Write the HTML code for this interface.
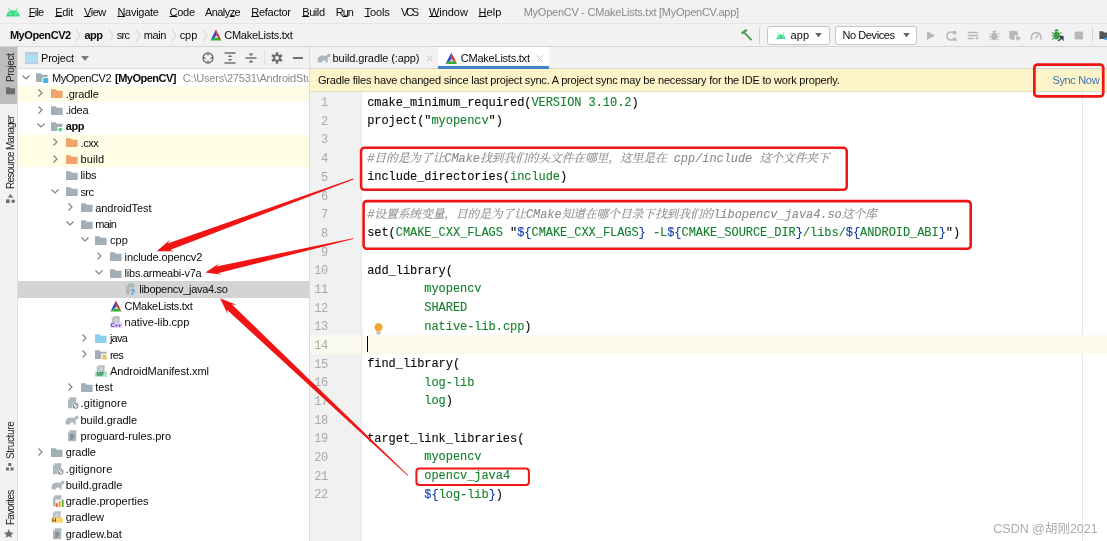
<!DOCTYPE html>
<html lang="en"><head><meta charset="utf-8"><title>MyOpenCV - CMakeLists.txt [MyOpenCV.app]</title>
<style>
html,body{margin:0;padding:0;}
body{width:1107px;height:541px;overflow:hidden;position:relative;background:#fff;will-change:transform;font-family:"Liberation Sans", "Noto Sans CJK SC", sans-serif;font-size:11px;color:#0a0a0a;}
.abs{position:absolute;}
.t{position:absolute;white-space:pre;line-height:16px;height:16px;}
.b{font-weight:bold;}
.g{color:#8a8a8a;}
.code{position:absolute;left:367.2px;white-space:pre;font-family:"Liberation Mono", "Noto Serif CJK SC", monospace;font-size:12px;letter-spacing:-0.06px;line-height:18px;height:18px;color:#0a0a0a;-webkit-text-stroke:0.12px currentColor;}
.ln{position:absolute;left:308px;width:20px;letter-spacing:-0.3px;text-align:right;font-family:"Liberation Mono", "Noto Serif CJK SC", monospace;font-size:12px;line-height:18px;height:18px;color:#a9a9a9;}
.s{color:#17802f;}
.v{color:#0f3bb0;}
.c{color:#8c8c8c;font-style:italic;}
.c i{font-size:11.72px;font-style:italic;}
.u{text-decoration:underline;text-underline-offset:0.3px;text-decoration-thickness:1px;}
svg{position:absolute;overflow:visible;}
.vt{position:absolute;white-space:pre;transform:rotate(-90deg);transform-origin:0 0;font-size:10px;line-height:14px;height:14px;color:#222;}

</style></head><body>
<div class="abs" style="left:0px;top:0px;width:1107px;height:69px;background:#f2f2f2;"></div>
<div class="abs" style="left:0px;top:23px;width:1107px;height:1px;background:#e6e6e6;"></div>
<div class="abs" style="left:0px;top:46px;width:1107px;height:1px;background:#d4d4d4;"></div>
<div class="abs" style="left:0px;top:47px;width:17px;height:494px;background:#f2f2f2;"></div>
<div class="abs" style="left:0px;top:47px;width:17px;height:57px;background:#bdbdbd;"></div>
<div class="abs" style="left:17px;top:47px;width:1px;height:494px;background:#dedede;"></div>
<div class="abs" style="left:18px;top:68px;width:291px;height:1px;background:#dedede;"></div>
<div class="abs" style="left:310px;top:68px;width:797px;height:1px;background:#d4d4d4;"></div>
<div class="abs" style="left:309px;top:47px;width:1px;height:494px;background:#dcdcdc;"></div>
<svg style="left:6px;top:7.6px" width="14" height="8.6" viewBox="0 0 14 8.6"><path d="M0.3 8.6 A6.7 6.4 0 0 1 13.7 8.6 Z" fill="#3ddc84"/><path d="M2.6 0.4 L4.2 3 M11.4 0.4 L9.8 3" stroke="#3ddc84" stroke-width="1" fill="none"/><circle cx="4.2" cy="5.8" r="0.75" fill="#f2f2f2"/><circle cx="9.8" cy="5.8" r="0.75" fill="#f2f2f2"/></svg>
<div class="t m" style="left:28.7px;top:4px;letter-spacing:-0.74px;"><span class="u">F</span>ile</div>
<div class="t m" style="left:55.2px;top:4px;letter-spacing:-0.29px;"><span class="u">E</span>dit</div>
<div class="t m" style="left:84px;top:4px;letter-spacing:-0.48px;"><span class="u">V</span>iew</div>
<div class="t m" style="left:117.4px;top:4px;letter-spacing:-0.26px;"><span class="u">N</span>avigate</div>
<div class="t m" style="left:169.6px;top:4px;letter-spacing:-0.30px;"><span class="u">C</span>ode</div>
<div class="t m" style="left:205px;top:4px;letter-spacing:-0.57px;">Analy<span class="u">z</span>e</div>
<div class="t m" style="left:251.3px;top:4px;letter-spacing:-0.27px;"><span class="u">R</span>efactor</div>
<div class="t m" style="left:302.2px;top:4px;letter-spacing:-0.41px;"><span class="u">B</span>uild</div>
<div class="t m" style="left:335.8px;top:4px;letter-spacing:-1.04px;">R<span class="u">u</span>n</div>
<div class="t m" style="left:364.5px;top:4px;letter-spacing:-0.09px;"><span class="u">T</span>ools</div>
<div class="t m" style="left:400.9px;top:4px;letter-spacing:-2.26px;">VCS</div>
<div class="t m" style="left:429px;top:4px;letter-spacing:-0.06px;"><span class="u">W</span>indow</div>
<div class="t m" style="left:478.6px;top:4px;letter-spacing:0.06px;"><span class="u">H</span>elp</div>
<div class="t g ttl" style="left:523.7px;top:4px;letter-spacing:-0.25px;">MyOpenCV - CMakeLists.txt [MyOpenCV.app]</div>
<div class="t b" style="left:9.9px;top:27px;letter-spacing:-0.44px;">MyOpenCV2</div>
<div class="t b" style="left:84.5px;top:27px;letter-spacing:-0.58px;">app</div>
<div class="t " style="left:116.7px;top:27px;letter-spacing:-0.73px;">src</div>
<div class="t " style="left:143.7px;top:27px;letter-spacing:-0.41px;">main</div>
<div class="t " style="left:179.7px;top:27px;letter-spacing:-0.07px;">cpp</div>
<div class="t " style="left:224.3px;top:27px;letter-spacing:-0.28px;">CMakeLists.txt</div>
<svg style="left:75px;top:28.5px" width="6" height="13" viewBox="0 0 6 13"><path d="M1 0.5 L5 6.5 L1 12.5" fill="none" stroke="#cfcfcf" stroke-width="1"/></svg>
<svg style="left:107.5px;top:28.5px" width="6" height="13" viewBox="0 0 6 13"><path d="M1 0.5 L5 6.5 L1 12.5" fill="none" stroke="#cfcfcf" stroke-width="1"/></svg>
<svg style="left:134.5px;top:28.5px" width="6" height="13" viewBox="0 0 6 13"><path d="M1 0.5 L5 6.5 L1 12.5" fill="none" stroke="#cfcfcf" stroke-width="1"/></svg>
<svg style="left:170.5px;top:28.5px" width="6" height="13" viewBox="0 0 6 13"><path d="M1 0.5 L5 6.5 L1 12.5" fill="none" stroke="#cfcfcf" stroke-width="1"/></svg>
<svg style="left:202px;top:28.5px" width="6" height="13" viewBox="0 0 6 13"><path d="M1 0.5 L5 6.5 L1 12.5" fill="none" stroke="#cfcfcf" stroke-width="1"/></svg>
<svg style="left:209.5px;top:29px" width="12" height="12" viewBox="0 0 12 12"><path d="M6 0.5 L6.6 7 L0.5 11.5 Z" fill="#2a4bd0"/><path d="M6 0.5 L11.5 11.5 L6.6 7 Z" fill="#e02020"/><path d="M0.5 11.5 L6.6 7 L11.5 11.5 Z" fill="#2fb02f"/><path d="M6.3 6.2 L4.6 9 L8.4 9 Z" fill="#d8d8d8"/></svg>
<svg style="left:739px;top:28px" width="15" height="14" viewBox="0 0 15 14"><path d="M2 4.5 L6.5 1.2 L9 2.2 L6.3 4.2 L13.3 11.5 L11.8 12.8 L4.8 5.5 L3.4 6.4 Z" fill="#4f9b4f"/></svg>
<div class="abs" style="left:759px;top:27px;width:1px;height:17px;background:#d0d0d0;"></div>
<div class="abs" style="left:767px;top:26px;width:61px;height:17px;background:#fff;border:1px solid #c6c6c6;border-radius:3px;"></div>
<svg style="left:776px;top:31.5px" width="10" height="7.5" viewBox="0 0 16 12"><path d="M1 11 A7 7 0 0 1 15 11 Z" fill="#3ddc84"/><path d="M3.2 1 L5 4 M12.8 1 L11 4" stroke="#3ddc84" stroke-width="1.4" fill="none"/><circle cx="5" cy="8" r="1" fill="#fff"/><circle cx="11" cy="8" r="1" fill="#fff"/></svg>
<div class="t " style="left:790.5px;top:27px;letter-spacing:0.07px;">app</div>
<svg style="left:815px;top:33px" width="7" height="4.2" viewBox="0 0 8 5"><path d="M0 0 L8 0 L4 5 Z" fill="#626262"/></svg>
<div class="abs" style="left:835px;top:26px;width:80px;height:17px;background:#fff;border:1px solid #c6c6c6;border-radius:3px;"></div>
<div class="t " style="left:842.4px;top:27px;letter-spacing:-0.40px;">No Devices</div>
<svg style="left:903px;top:33px" width="7" height="4.2" viewBox="0 0 8 5"><path d="M0 0 L8 0 L4 5 Z" fill="#626262"/></svg>
<svg style="left:0;top:0" width="1107" height="48" viewBox="0 0 1107 48"><path d="M927 31.2 L935 35.5 L927 39.8 Z" fill="#b7b7b7"/><path d="M954.3 34 A4 4 0 1 0 954.6 37.6" fill="none" stroke="#b7b7b7" stroke-width="1.5"/><path d="M952 31 L956.2 31 L956.2 35.2 Z" fill="#b7b7b7"/><path d="M952.6 40.8 L954.9 36.8 L957.2 40.8 Z" fill="#b7b7b7"/><path d="M967.8 32.6 H978 M967.8 35.6 H978 M967.8 38.6 H974" stroke="#b7b7b7" stroke-width="1.5"/><path d="M975.5 38.2 H978.5 M977 36.8 V39.8" stroke="#b7b7b7" stroke-width="1"/><ellipse cx="994.3" cy="36.4" rx="2.9" ry="3.7" fill="#b7b7b7"/><path d="M992.3 32.4 A2 2 0 0 1 996.3 32.4 Z" fill="#b7b7b7"/><path d="M989.3 33.4 L991.8 34.8 M999.3 33.4 L996.8 34.8 M989 36.6 H991.5 M999.6 36.6 H997 M989.5 40 L991.8 38.4 M999.1 40 L996.8 38.4" stroke="#b7b7b7" stroke-width="1"/><path d="M1009.3 31 H1015.5 A2.5 2.5 0 0 1 1018 33.5 V35 H1014.8 V39.8 H1012 A2.7 2.7 0 0 1 1009.3 37.1 Z" fill="#b7b7b7"/><path d="M1016.2 35.6 L1021.4 38.2 L1016.2 40.8 Z" fill="#b7b7b7"/><path d="M1031.8 39.6 A4.9 4.9 0 1 1 1040.6 39.6" fill="none" stroke="#b7b7b7" stroke-width="1.7"/><path d="M1035.4 38.6 L1038.4 34.6" stroke="#b7b7b7" stroke-width="1.5"/><ellipse cx="1056.6" cy="35.6" rx="3" ry="3.9" fill="#3e9a45"/><path d="M1054.5 31.4 A2.1 2.1 0 0 1 1058.7 31.4 Z" fill="#3e9a45"/><path d="M1051.8 32.4 L1054 33.8 M1061.4 32.4 L1059.2 33.8 M1051.5 35.8 H1054 M1061.7 35.8 H1059.3 M1052 39.4 L1054.2 37.8" stroke="#3e9a45" stroke-width="1.1"/><path d="M1058.4 36 H1063.6 V41.2 Z" fill="#3d4b54"/><path d="M1058.3 41 L1062 37.4" stroke="#3d4b54" stroke-width="1.5"/><rect x="1074.6" y="31.6" width="8.4" height="7.8" fill="#b7b7b7"/><rect x="1092" y="28" width="1" height="14.5" fill="#d2d2d2"/><path d="M1099.4 31.3 H1103 L1104 32.6 H1107 V39 H1099.4 Z" fill="#55595c"/><rect x="1104.5" y="37.5" width="2.5" height="2.5" fill="#4a9fe0"/></svg>
<div class="vt" style="left:3.5px;top:81.7px;letter-spacing:-0.37px;">Project</div>
<svg style="left:5.7px;top:87px" width="9" height="7.5" viewBox="0 0 10 8"><path d="M0 0 H4 L5 1.3 H10 V8 H0 Z" fill="#6e6e6e"/></svg>
<div class="vt" style="left:3.5px;top:188.7px;letter-spacing:-0.74px;">Resource Manager</div>
<svg style="left:5.5px;top:193.5px" width="9" height="9" viewBox="0 0 10 10"><path d="M5 0 L8 4 H2 Z" fill="#6e6e6e"/><rect x="0" y="6" width="4" height="4" fill="#6e6e6e"/><circle cx="8" cy="8" r="2" fill="#6e6e6e"/></svg>
<div class="vt" style="left:3.5px;top:458.7px;letter-spacing:-0.35px;">Structure</div>
<svg style="left:5.7px;top:463px" width="7.5" height="7.5" viewBox="0 0 10 10"><rect x="3" y="0" width="4" height="4" fill="#6e6e6e"/><rect x="0" y="6" width="4" height="4" fill="#6e6e6e"/><rect x="6" y="6" width="4" height="4" fill="#6e6e6e"/></svg>
<div class="vt" style="left:3.5px;top:525.2px;letter-spacing:-0.74px;">Favorites</div>
<svg style="left:4px;top:529px" width="9.5" height="9" viewBox="0 0 11 10"><path d="M5.5 0 L7.2 3.6 L11 4 L8.2 6.6 L9 10 L5.5 8.2 L2 10 L2.8 6.6 L0 4 L3.8 3.6 Z" fill="#6e6e6e"/></svg>
<svg style="left:25px;top:52px" width="13" height="12" viewBox="0 0 13 12"><rect x="0.5" y="0.5" width="12" height="11" fill="#aee0f5" stroke="#c3c9cc"/><rect x="0.5" y="0.5" width="12" height="2.5" fill="#c3c9cc"/></svg>
<div class="t " style="left:41px;top:50px;letter-spacing:-0.21px;">Project</div>
<svg style="left:81px;top:56px" width="8" height="5" viewBox="0 0 8 5"><path d="M0 0 L8 0 L4 5 Z" fill="#7a7a7a"/></svg>
<svg style="left:202px;top:52px" width="12" height="12" viewBox="0 0 12 12"><circle cx="6" cy="6" r="5" fill="none" stroke="#6e6e6e" stroke-width="1.4"/><path d="M6 1 V3.8 M6 8.2 V11 M1 6 H3.8 M8.2 6 H11" stroke="#6e6e6e" stroke-width="1.3"/></svg>
<svg style="left:224px;top:52px" width="12" height="12" viewBox="0 0 12 12"><path d="M0.5 1 H11.5 M0.5 11 H11.5" stroke="#6e6e6e" stroke-width="1.5"/><path d="M6 2.8 L8.2 5 H3.8 Z M6 9.2 L8.2 7 H3.8 Z" fill="#6e6e6e"/></svg>
<svg style="left:245px;top:52px" width="12" height="12" viewBox="0 0 12 12"><path d="M0.5 6 H11.5" stroke="#6e6e6e" stroke-width="1.5"/><path d="M6 4.2 L8.4 1.6 H3.6 Z M6 7.8 L8.4 10.4 H3.6 Z" fill="#6e6e6e"/></svg>
<div class="abs" style="left:264px;top:51px;width:1px;height:14px;background:#e0e0e0;"></div>
<svg style="left:271px;top:52px" width="12" height="12" viewBox="-6 -6 12 12"><g fill="#6e6e6e"><circle r="3.8"/><rect x="-1.2" y="-5.8" width="2.4" height="3" transform="rotate(0)"/><rect x="-1.2" y="-5.8" width="2.4" height="3" transform="rotate(60)"/><rect x="-1.2" y="-5.8" width="2.4" height="3" transform="rotate(120)"/><rect x="-1.2" y="-5.8" width="2.4" height="3" transform="rotate(180)"/><rect x="-1.2" y="-5.8" width="2.4" height="3" transform="rotate(240)"/><rect x="-1.2" y="-5.8" width="2.4" height="3" transform="rotate(300)"/></g><circle r="1.9" fill="#f2f2f2"/></svg>
<div class="abs" style="left:293.3px;top:57.3px;width:10.2px;height:1.6px;background:#6e6e6e;"></div>
<div class="abs" style="left:18px;top:85.7px;width:291px;height:16.5px;background:#fefde6;"></div>
<div class="abs" style="left:18px;top:134.6px;width:291px;height:16.5px;background:#fefde6;"></div>
<div class="abs" style="left:18px;top:150.8px;width:291px;height:16.5px;background:#fefde6;"></div>
<div class="abs" style="left:18px;top:281.2px;width:291px;height:16.5px;background:#d4d4d4;"></div>
<svg style="left:22px;top:74.5px" width="8" height="5" viewBox="0 0 8 5"><path d="M0.5 0.5 L4 4 L7.5 0.5" fill="none" stroke="#7d7d7d" stroke-width="1.1"/></svg>
<svg style="left:36.4px;top:72.0px" width="12" height="11" viewBox="0 0 12 11"><path d="M0 1.2 H4.6 L5.9 2.7 H11.6 V10 H0 Z" fill="#a3afb7"/><rect x="6.3" y="5.2" width="6" height="6" fill="#fff"/><rect x="7.2" y="6" width="5" height="5" fill="#40b6e0"/></svg>
<div class="t " style="left:51.9px;top:69.5px;letter-spacing:-0.42px;">MyOpenCV2</div>
<div class="t b" style="left:115px;top:69.5px;letter-spacing:-0.50px;">[MyOpenCV]</div>
<div class="t g" style="left:182.8px;top:69.5px;letter-spacing:-0.20px;width:126.2px;overflow:hidden;letter-spacing:-0.19px;">C:\Users\27531\AndroidStudioProjects\MyOpenCV2</div>
<svg style="left:38.0px;top:89.3px" width="5" height="8" viewBox="0 0 5 8"><path d="M0.5 0.5 L4 4 L0.5 7.5" fill="none" stroke="#7d7d7d" stroke-width="1.1"/></svg>
<svg style="left:51px;top:88.3px" width="12" height="11" viewBox="0 0 12 11"><path d="M0 1.2 H4.6 L5.9 2.7 H11.6 V10 H0 Z" fill="#f2a36b"/></svg>
<div class="t " style="left:65.7px;top:85.8px;letter-spacing:-0.09px;">.gradle</div>
<svg style="left:38.0px;top:105.6px" width="5" height="8" viewBox="0 0 5 8"><path d="M0.5 0.5 L4 4 L0.5 7.5" fill="none" stroke="#7d7d7d" stroke-width="1.1"/></svg>
<svg style="left:51px;top:104.6px" width="12" height="11" viewBox="0 0 12 11"><path d="M0 1.2 H4.6 L5.9 2.7 H11.6 V10 H0 Z" fill="#a3afb7"/></svg>
<div class="t " style="left:65.7px;top:102.1px;letter-spacing:-0.26px;">.idea</div>
<svg style="left:36.5px;top:123.4px" width="8" height="5" viewBox="0 0 8 5"><path d="M0.5 0.5 L4 4 L7.5 0.5" fill="none" stroke="#7d7d7d" stroke-width="1.1"/></svg>
<svg style="left:51px;top:120.9px" width="12" height="11" viewBox="0 0 12 11"><path d="M0 1.2 H4.6 L5.9 2.7 H11.6 V10 H0 Z" fill="#a3afb7"/><rect x="6.5" y="6" width="5.5" height="5" fill="#fff"/><circle cx="9.3" cy="8.6" r="1.9" fill="#3ddc84"/></svg>
<div class="t b" style="left:65.7px;top:118.4px;letter-spacing:-0.43px;">app</div>
<svg style="left:52.8px;top:138.2px" width="5" height="8" viewBox="0 0 5 8"><path d="M0.5 0.5 L4 4 L0.5 7.5" fill="none" stroke="#7d7d7d" stroke-width="1.1"/></svg>
<svg style="left:65.8px;top:137.2px" width="12" height="11" viewBox="0 0 12 11"><path d="M0 1.2 H4.6 L5.9 2.7 H11.6 V10 H0 Z" fill="#f2a36b"/></svg>
<div class="t " style="left:80.5px;top:134.7px;letter-spacing:-0.42px;">.cxx</div>
<svg style="left:52.8px;top:154.5px" width="5" height="8" viewBox="0 0 5 8"><path d="M0.5 0.5 L4 4 L0.5 7.5" fill="none" stroke="#7d7d7d" stroke-width="1.1"/></svg>
<svg style="left:65.8px;top:153.5px" width="12" height="11" viewBox="0 0 12 11"><path d="M0 1.2 H4.6 L5.9 2.7 H11.6 V10 H0 Z" fill="#f2a36b"/></svg>
<div class="t " style="left:80.5px;top:151.0px;letter-spacing:0.12px;">build</div>
<svg style="left:65.8px;top:169.8px" width="12" height="11" viewBox="0 0 12 11"><path d="M0 1.2 H4.6 L5.9 2.7 H11.6 V10 H0 Z" fill="#a3afb7"/></svg>
<div class="t " style="left:80.5px;top:167.3px;letter-spacing:-0.13px;">libs</div>
<svg style="left:51.3px;top:188.6px" width="8" height="5" viewBox="0 0 8 5"><path d="M0.5 0.5 L4 4 L7.5 0.5" fill="none" stroke="#7d7d7d" stroke-width="1.1"/></svg>
<svg style="left:65.8px;top:186.1px" width="12" height="11" viewBox="0 0 12 11"><path d="M0 1.2 H4.6 L5.9 2.7 H11.6 V10 H0 Z" fill="#a3afb7"/></svg>
<div class="t " style="left:80.5px;top:183.6px;letter-spacing:-0.63px;">src</div>
<svg style="left:67.5px;top:203.4px" width="5" height="8" viewBox="0 0 5 8"><path d="M0.5 0.5 L4 4 L0.5 7.5" fill="none" stroke="#7d7d7d" stroke-width="1.1"/></svg>
<svg style="left:80.5px;top:202.4px" width="12" height="11" viewBox="0 0 12 11"><path d="M0 1.2 H4.6 L5.9 2.7 H11.6 V10 H0 Z" fill="#a3afb7"/></svg>
<div class="t " style="left:95.2px;top:199.9px;letter-spacing:-0.05px;">androidTest</div>
<svg style="left:66.0px;top:221.2px" width="8" height="5" viewBox="0 0 8 5"><path d="M0.5 0.5 L4 4 L7.5 0.5" fill="none" stroke="#7d7d7d" stroke-width="1.1"/></svg>
<svg style="left:80.5px;top:218.7px" width="12" height="11" viewBox="0 0 12 11"><path d="M0 1.2 H4.6 L5.9 2.7 H11.6 V10 H0 Z" fill="#a3afb7"/></svg>
<div class="t " style="left:95.2px;top:216.2px;letter-spacing:-0.68px;">main</div>
<svg style="left:80.7px;top:237.4px" width="8" height="5" viewBox="0 0 8 5"><path d="M0.5 0.5 L4 4 L7.5 0.5" fill="none" stroke="#7d7d7d" stroke-width="1.1"/></svg>
<svg style="left:95.2px;top:234.9px" width="12" height="11" viewBox="0 0 12 11"><path d="M0 1.2 H4.6 L5.9 2.7 H11.6 V10 H0 Z" fill="#a3afb7"/></svg>
<div class="t " style="left:109.9px;top:232.4px;letter-spacing:0.08px;">cpp</div>
<svg style="left:96.9px;top:252.2px" width="5" height="8" viewBox="0 0 5 8"><path d="M0.5 0.5 L4 4 L0.5 7.5" fill="none" stroke="#7d7d7d" stroke-width="1.1"/></svg>
<svg style="left:109.9px;top:251.2px" width="12" height="11" viewBox="0 0 12 11"><path d="M0 1.2 H4.6 L5.9 2.7 H11.6 V10 H0 Z" fill="#a3afb7"/></svg>
<div class="t " style="left:124.60000000000001px;top:248.7px;letter-spacing:-0.13px;">include.opencv2</div>
<svg style="left:95.4px;top:270.0px" width="8" height="5" viewBox="0 0 8 5"><path d="M0.5 0.5 L4 4 L7.5 0.5" fill="none" stroke="#7d7d7d" stroke-width="1.1"/></svg>
<svg style="left:109.9px;top:267.5px" width="12" height="11" viewBox="0 0 12 11"><path d="M0 1.2 H4.6 L5.9 2.7 H11.6 V10 H0 Z" fill="#a3afb7"/></svg>
<div class="t " style="left:124.60000000000001px;top:265.0px;letter-spacing:-0.24px;">libs.armeabi-v7a</div>
<svg style="left:125.39999999999999px;top:283.3px" width="12.5" height="12" viewBox="0 0 12.5 12"><path d="M3 0.3 H9.3 V11.3 H1 V2.6 Z" fill="#aeb8bf"/><path d="M3 0.3 V2.6 H1 Z" fill="#d5dbdf"/><rect x="4.6" y="4.4" width="6.2" height="7.4" fill="#d5d5d5" opacity="0.85"/><text x="4.9" y="11.6" font-size="8.5" fill="#3a8fdd" font-family="Liberation Sans, sans-serif" font-weight="bold">?</text></svg>
<div class="t " style="left:139.29999999999998px;top:281.3px;letter-spacing:-0.29px;">libopencv_java4.so</div>
<svg style="left:109.9px;top:299.6px" width="12" height="12" viewBox="0 0 12 12"><path d="M6 0.5 L6.6 7 L0.5 11.5 Z" fill="#2a4bd0"/><path d="M6 0.5 L11.5 11.5 L6.6 7 Z" fill="#e02020"/><path d="M0.5 11.5 L6.6 7 L11.5 11.5 Z" fill="#2fb02f"/><path d="M6.3 6.2 L4.6 9 L8.4 9 Z" fill="#d8d8d8"/></svg>
<div class="t " style="left:124.60000000000001px;top:297.6px;letter-spacing:-0.30px;">CMakeLists.txt</div>
<svg style="left:109.60000000000001px;top:315.9px" width="12.5" height="12" viewBox="0 0 12.5 12"><path d="M3.6 0.2 H9.6 V7 H1.8 V2.2 Z" fill="#b3bcc3"/><path d="M3.6 0.2 V2.2 H1.8 Z" fill="#dfe3e6"/><path d="M4.5 3 H8 M3.5 4.8 H8" stroke="#e9ecee" stroke-width="0.8"/><rect x="0" y="6.4" width="12.2" height="5.4" fill="#ddcff8"/><text x="0.7" y="11" font-size="5.6" fill="#5b35b8" font-family="Liberation Sans, sans-serif" font-weight="bold">C++</text></svg>
<div class="t " style="left:124.60000000000001px;top:313.9px;letter-spacing:-0.01px;">native-lib.cpp</div>
<svg style="left:82.2px;top:333.7px" width="5" height="8" viewBox="0 0 5 8"><path d="M0.5 0.5 L4 4 L0.5 7.5" fill="none" stroke="#7d7d7d" stroke-width="1.1"/></svg>
<svg style="left:95.2px;top:332.7px" width="12" height="11" viewBox="0 0 12 11"><path d="M0 1.2 H4.6 L5.9 2.7 H11.6 V10 H0 Z" fill="#8fd0ef"/></svg>
<div class="t " style="left:109.9px;top:330.2px;letter-spacing:-0.76px;">java</div>
<svg style="left:82.2px;top:350.0px" width="5" height="8" viewBox="0 0 5 8"><path d="M0.5 0.5 L4 4 L0.5 7.5" fill="none" stroke="#7d7d7d" stroke-width="1.1"/></svg>
<svg style="left:95.2px;top:349.0px" width="12" height="11" viewBox="0 0 12 11"><path d="M0 1.2 H4.6 L5.9 2.7 H11.6 V10 H0 Z" fill="#a3afb7"/><rect x="6.2" y="4.6" width="6" height="6.6" fill="#fff"/><rect x="7" y="5.3" width="5" height="5.7" fill="#f6e6b8"/><path d="M7.8 6.8 H11.2 M7.8 8.2 H11.2 M7.8 9.6 H11.2" stroke="#dba53c" stroke-width="0.8"/></svg>
<div class="t " style="left:109.9px;top:346.5px;letter-spacing:-0.74px;">res</div>
<svg style="left:94.9px;top:364.8px" width="12.5" height="12" viewBox="0 0 12.5 12"><path d="M3.6 0.2 H9.6 V7 H1.8 V2.2 Z" fill="#b3bcc3"/><path d="M3.6 0.2 V2.2 H1.8 Z" fill="#dfe3e6"/><path d="M4.5 3 H8 M3.5 4.8 H8" stroke="#e9ecee" stroke-width="0.8"/><rect x="0" y="6.4" width="12" height="5.4" fill="#a9e5c0"/><text x="1.5" y="11" font-size="5.4" fill="#1f7d46" font-family="Liberation Sans, sans-serif" font-weight="bold">MF</text></svg>
<div class="t " style="left:109.9px;top:362.8px;letter-spacing:-0.03px;">AndroidManifest.xml</div>
<svg style="left:67.5px;top:382.6px" width="5" height="8" viewBox="0 0 5 8"><path d="M0.5 0.5 L4 4 L0.5 7.5" fill="none" stroke="#7d7d7d" stroke-width="1.1"/></svg>
<svg style="left:80.5px;top:381.6px" width="12" height="11" viewBox="0 0 12 11"><path d="M0 1.2 H4.6 L5.9 2.7 H11.6 V10 H0 Z" fill="#a3afb7"/></svg>
<div class="t " style="left:95.2px;top:379.1px;letter-spacing:-0.01px;">test</div>
<svg style="left:66.6px;top:397.3px" width="12.5" height="12" viewBox="0 0 12.5 12"><path d="M3 0.3 H9.3 V11.3 H1 V2.6 Z" fill="#aeb8bf"/><path d="M3 0.3 V2.6 H1 Z" fill="#d5dbdf"/><circle cx="8.6" cy="8.8" r="3.4" fill="#fff"/><circle cx="8.6" cy="8.8" r="2.5" fill="none" stroke="#5f6468" stroke-width="0.9"/><path d="M6.9 10.5 L10.3 7.1" stroke="#5f6468" stroke-width="0.9"/></svg>
<div class="t " style="left:80.5px;top:395.3px;letter-spacing:0.14px;">.gitignore</div>
<svg style="left:65.3px;top:414.6px" width="14" height="10" viewBox="0 0 14 10"><path d="M0.8 9.6 C0 5.6 1.8 2.6 5.2 2.6 C7.4 2.6 8.6 3.4 9.8 2.2 C10.9 1 12.2 0.3 13.1 1.2 C14 2.2 13.4 3.8 12.2 4.2 C11.4 4.5 11 4.1 10.7 4.8 L10.7 9.6 H8.7 V8 C7.6 7.4 6.3 7.4 5.2 8 V9.6 H3.2 V8.2 L2.7 9.6 Z" fill="#adb7be"/></svg>
<div class="t " style="left:80.5px;top:411.6px;letter-spacing:-0.02px;">build.gradle</div>
<svg style="left:66.6px;top:429.9px" width="12.5" height="12" viewBox="0 0 12.5 12"><path d="M3 0.3 H9.3 V11.3 H1 V2.6 Z" fill="#aeb8bf"/><path d="M3 0.3 V2.6 H1 Z" fill="#d5dbdf"/><path d="M3 5 H7.3 M3 7 H7.3 M3 9 H5.8" stroke="#606c75" stroke-width="1"/></svg>
<div class="t " style="left:80.5px;top:427.9px;letter-spacing:0.01px;">proguard-rules.pro</div>
<svg style="left:38.0px;top:447.7px" width="5" height="8" viewBox="0 0 5 8"><path d="M0.5 0.5 L4 4 L0.5 7.5" fill="none" stroke="#7d7d7d" stroke-width="1.1"/></svg>
<svg style="left:51px;top:446.7px" width="12" height="11" viewBox="0 0 12 11"><path d="M0 1.2 H4.6 L5.9 2.7 H11.6 V10 H0 Z" fill="#a3afb7"/></svg>
<div class="t " style="left:65.7px;top:444.2px;letter-spacing:-0.06px;">gradle</div>
<svg style="left:51.8px;top:462.5px" width="12.5" height="12" viewBox="0 0 12.5 12"><path d="M3 0.3 H9.3 V11.3 H1 V2.6 Z" fill="#aeb8bf"/><path d="M3 0.3 V2.6 H1 Z" fill="#d5dbdf"/><circle cx="8.6" cy="8.8" r="3.4" fill="#fff"/><circle cx="8.6" cy="8.8" r="2.5" fill="none" stroke="#5f6468" stroke-width="0.9"/><path d="M6.9 10.5 L10.3 7.1" stroke="#5f6468" stroke-width="0.9"/></svg>
<div class="t " style="left:65.7px;top:460.5px;letter-spacing:0.15px;">.gitignore</div>
<svg style="left:50.5px;top:479.8px" width="14" height="10" viewBox="0 0 14 10"><path d="M0.8 9.6 C0 5.6 1.8 2.6 5.2 2.6 C7.4 2.6 8.6 3.4 9.8 2.2 C10.9 1 12.2 0.3 13.1 1.2 C14 2.2 13.4 3.8 12.2 4.2 C11.4 4.5 11 4.1 10.7 4.8 L10.7 9.6 H8.7 V8 C7.6 7.4 6.3 7.4 5.2 8 V9.6 H3.2 V8.2 L2.7 9.6 Z" fill="#adb7be"/></svg>
<div class="t " style="left:65.7px;top:476.8px;letter-spacing:-0.02px;">build.gradle</div>
<svg style="left:51.8px;top:495.1px" width="12.5" height="12" viewBox="0 0 12.5 12"><path d="M3 0.3 H9.3 V11.3 H1 V2.6 Z" fill="#aeb8bf"/><path d="M3 0.3 V2.6 H1 Z" fill="#d5dbdf"/><rect x="3.4" y="4.5" width="8.6" height="7.5" fill="#fff" opacity="0.9"/><rect x="6.7" y="6.4" width="2" height="5.6" fill="#f0a030"/><rect x="9.7" y="4.6" width="2" height="7.4" fill="#62b543"/><rect x="3.7" y="8.2" width="2" height="3.8" fill="#f26522"/></svg>
<div class="t " style="left:65.7px;top:493.1px;letter-spacing:0.02px;">gradle.properties</div>
<svg style="left:50.7px;top:511.4px" width="12.5" height="12" viewBox="0 0 12.5 12"><path d="M3.6 0.2 H9.6 V7 H1.8 V2.2 Z" fill="#b3bcc3"/><path d="M3.6 0.2 V2.2 H1.8 Z" fill="#dfe3e6"/><path d="M4.5 3 H8 M3.5 4.8 H8" stroke="#e9ecee" stroke-width="0.8"/><rect x="0" y="6.4" width="12" height="5.4" fill="#f9d67a"/><text x="1.3" y="11" font-size="5.4" fill="#5a4300" font-family="Liberation Sans, sans-serif" font-weight="bold">H</text></svg>
<div class="t " style="left:65.7px;top:509.4px;letter-spacing:-0.05px;">gradlew</div>
<svg style="left:51.8px;top:527.7px" width="12.5" height="12" viewBox="0 0 12.5 12"><path d="M3 0.3 H9.3 V11.3 H1 V2.6 Z" fill="#aeb8bf"/><path d="M3 0.3 V2.6 H1 Z" fill="#d5dbdf"/><path d="M3 5 H7.3 M3 7 H7.3 M3 9 H5.8" stroke="#606c75" stroke-width="1"/></svg>
<div class="t " style="left:65.7px;top:525.7px;letter-spacing:-0.02px;">gradlew.bat</div>
<div class="abs" style="left:438px;top:47px;width:111px;height:19px;background:#ffffff;"></div>
<svg style="left:317px;top:53.0px" width="14" height="10" viewBox="0 0 14 10"><path d="M0.8 9.6 C0 5.6 1.8 2.6 5.2 2.6 C7.4 2.6 8.6 3.4 9.8 2.2 C10.9 1 12.2 0.3 13.1 1.2 C14 2.2 13.4 3.8 12.2 4.2 C11.4 4.5 11 4.1 10.7 4.8 L10.7 9.6 H8.7 V8 C7.6 7.4 6.3 7.4 5.2 8 V9.6 H3.2 V8.2 L2.7 9.6 Z" fill="#adb7be"/></svg>
<div class="t " style="left:332.6px;top:50px;letter-spacing:-0.10px;">build.gradle (:app)</div>
<svg style="left:425.5px;top:54.5px" width="7" height="7" viewBox="0 0 7 7"><path d="M0.5 0.5 L6.5 6.5 M6.5 0.5 L0.5 6.5" stroke="#c2c2c2" stroke-width="1"/></svg>
<svg style="left:445.2px;top:51.5px" width="12.6" height="12.6" viewBox="0 0 12 12"><path d="M6 0.5 L6.6 7 L0.5 11.5 Z" fill="#2a4bd0"/><path d="M6 0.5 L11.5 11.5 L6.6 7 Z" fill="#e02020"/><path d="M0.5 11.5 L6.6 7 L11.5 11.5 Z" fill="#2fb02f"/><path d="M6.3 6.2 L4.6 9 L8.4 9 Z" fill="#d8d8d8"/></svg>
<div class="t " style="left:460.8px;top:50px;letter-spacing:-0.23px;">CMakeLists.txt</div>
<svg style="left:535.5px;top:54.5px" width="7" height="7" viewBox="0 0 7 7"><path d="M0.5 0.5 L6.5 6.5 M6.5 0.5 L0.5 6.5" stroke="#c2c2c2" stroke-width="1"/></svg>
<div class="abs" style="left:438px;top:66px;width:111px;height:3px;background:#4083c9;"></div>
<div class="abs" style="left:309.5px;top:68.5px;width:797.5px;height:22.5px;background:#fdf4c9;"></div>
<div class="abs" style="left:309.5px;top:91px;width:797.5px;height:1px;background:#e3dfc0;"></div>
<div class="t " style="left:318px;top:72.3px;letter-spacing:-0.20px;">Gradle files have changed since last project sync. A project sync may be necessary for the IDE to work properly.</div>
<div class="t " style="left:1052.4px;top:72.3px;letter-spacing:-0.33px;color:#3f6fb3;">Sync Now</div>
<div class="abs" style="left:310px;top:92px;width:51px;height:449px;background:#f1f1f1;"></div>
<div class="abs" style="left:361px;top:92px;width:1px;height:449px;background:#e6e6e6;"></div>
<div class="abs" style="left:1082px;top:92px;width:1px;height:449px;background:#e6e6e6;"></div>
<div class="abs" style="left:362px;top:335.0px;width:745px;height:18.6px;background:#fcfaed;"></div>
<div class="abs" style="left:310px;top:335.0px;width:51px;height:18.6px;background:#faf9ee;"></div>
<div class="abs" style="left:366.5px;top:336.1px;width:1.5px;height:16px;background:#000;"></div>
<div class="ln" style="top:94.1px">1</div>
<div class="code" style="top:93.7px">cmake_minimum_required(<span class="s">VERSION 3.10.2</span>)</div>
<div class="ln" style="top:112.8px">2</div>
<div class="code" style="top:112.4px">project("<span class="s">myopencv</span>")</div>
<div class="ln" style="top:131.4px">3</div>
<div class="ln" style="top:150.1px">4</div>
<div class="code" style="top:149.7px"><span class="c">#<i>目的是为了让</i>CMake<i>找到我们的头文件在哪里，这里是在</i> cpp/include <i>这个文件夹下</i></span></div>
<div class="ln" style="top:168.8px">5</div>
<div class="code" style="top:168.4px">include_directories(<span class="s">include</span>)</div>
<div class="ln" style="top:187.5px">6</div>
<div class="ln" style="top:206.1px">7</div>
<div class="code" style="top:205.7px"><span class="c">#<i>设置系统变量，目的是为了让</i>CMake<i>知道在哪个目录下找到我们的</i>libopencv_java4.so<i>这个库</i></span></div>
<div class="ln" style="top:224.8px">8</div>
<div class="code" style="top:224.4px">set(<span class="s">CMAKE_CXX_FLAGS</span> "<span class="v">${</span><span class="s">CMAKE_CXX_FLAGS</span><span class="v">}</span><span class="s"> -L</span><span class="v">${</span><span class="s">CMAKE_SOURCE_DIR</span><span class="v">}</span><span class="s">/libs/</span><span class="v">${</span><span class="s">ANDROID_ABI</span><span class="v">}</span>")</div>
<div class="ln" style="top:243.5px">9</div>
<div class="ln" style="top:262.1px">10</div>
<div class="code" style="top:261.7px">add_library(</div>
<div class="ln" style="top:280.8px">11</div>
<div class="code" style="top:280.4px">        <span class="s">myopencv</span></div>
<div class="ln" style="top:299.5px">12</div>
<div class="code" style="top:299.1px">        <span class="s">SHARED</span></div>
<div class="ln" style="top:318.1px">13</div>
<div class="code" style="top:317.7px">        <span class="s">native-lib.cpp</span>)</div>
<div class="ln" style="top:336.8px">14</div>
<div class="ln" style="top:355.5px">15</div>
<div class="code" style="top:355.1px">find_library(</div>
<div class="ln" style="top:374.1px">16</div>
<div class="code" style="top:373.8px">        <span class="s">log-lib</span></div>
<div class="ln" style="top:392.8px">17</div>
<div class="code" style="top:392.4px">        <span class="s">log</span>)</div>
<div class="ln" style="top:411.5px">18</div>
<div class="ln" style="top:430.2px">19</div>
<div class="code" style="top:429.8px">target_link_libraries(</div>
<div class="ln" style="top:448.8px">20</div>
<div class="code" style="top:448.4px">        <span class="s">myopencv</span></div>
<div class="ln" style="top:467.5px">21</div>
<div class="code" style="top:467.1px">        <span class="s">opencv_java4</span></div>
<div class="ln" style="top:486.2px">22</div>
<div class="code" style="top:485.8px">        <span class="v">${</span><span class="s">log-lib</span><span class="v">}</span>)</div>
<svg style="left:373.5px;top:322.5px" width="9" height="12" viewBox="0 0 9 12"><path d="M4.5 0 A4.2 4.2 0 0 1 7.2 7.4 L6.6 8.6 H2.4 L1.8 7.4 A4.2 4.2 0 0 1 4.5 0 Z" fill="#f0a732"/><path d="M2.5 9 H6.5 V10.6 L5.6 11.6 H3.4 L2.5 10.6 Z" fill="#b4b9bd"/></svg>
<svg style="left:0;top:0" width="1107" height="541" viewBox="0 0 1107 541"><rect x="1034.35" y="64.65" width="68.90" height="31.70" rx="3.15" fill="none" stroke="#f01414" stroke-width="2.7"/></svg>
<svg style="left:0;top:0" width="1107" height="541" viewBox="0 0 1107 541"><rect x="361.05" y="147.85" width="485.70" height="41.90" rx="3.25" fill="none" stroke="#f01414" stroke-width="2.5"/></svg>
<svg style="left:0;top:0" width="1107" height="541" viewBox="0 0 1107 541"><rect x="363.60" y="201.10" width="607.10" height="47.60" rx="3.20" fill="none" stroke="#f01414" stroke-width="2.6"/></svg>
<svg style="left:0;top:0" width="1107" height="541" viewBox="0 0 1107 541"><rect x="416.40" y="468.60" width="112.50" height="16.40" rx="3.00" fill="none" stroke="#f01414" stroke-width="2"/></svg>
<svg style="left:0;top:0" width="1107" height="541" viewBox="0 0 1107 541"><polygon points="353.2,178.6 167.6,243.4 170.4,239.5 156.6,251.2 174.7,251.2 170.0,250.0 353.4,179.4" fill="#f01414"/><polygon points="353.1,238.3 216.3,266.4 219.7,263.1 205.4,272.5 222.3,274.8 217.9,273.2 353.3,239.1" fill="#f01414"/><polygon points="408.3,475.2 232.0,304.4 236.8,305.1 220.0,298.2 227.9,314.6 226.9,309.8 407.7,475.8" fill="#f01414"/></svg>
<div class="t" style="left:993.3px;top:519.6px;font-size:12.5px;line-height:18px;height:18px;color:#ababab;text-shadow:0 0 1px #fff;">CSDN @胡刚2021</div>
</body></html>
